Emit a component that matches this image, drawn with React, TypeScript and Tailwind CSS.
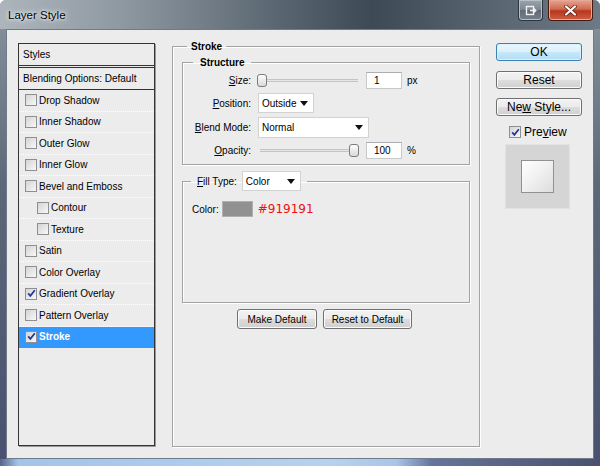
import React from 'react';

const sans = "font-['Liberation_Sans',Arial,sans-serif]";

function CheckBox({ checked = false }: { checked?: boolean }) {
  return (
    <span className="flex h-[12px] w-[12px] shrink-0 items-center justify-center border border-[#8f8f8f] bg-linear-to-br from-[#d4d4d4] to-[#f8f8f8]">
      {checked && (
        <svg width="9" height="9" viewBox="0 0 9 9">
          <path d="M1.2 4.4 L3.4 6.9 L7.8 1.3" fill="none" stroke="#23399e" strokeWidth="1.8" />
        </svg>
      )}
    </span>
  );
}

function WinButton({ children, primary = false, className = '' }: { children: React.ReactNode; primary?: boolean; className?: string }) {
  return (
    <button
      className={`flex items-center justify-center rounded-[3px] border text-black ${
        primary
          ? 'border-[#3c7fb1] bg-[linear-gradient(180deg,#eaf6fd_0%,#d9f0fc_50%,#c6e8fa_51%,#b3dcf3_100%)] shadow-[inset_0_0_0_1px_#d6f3ff]'
          : 'border-[#707070] bg-[linear-gradient(180deg,#f3f3f3_0%,#ebebeb_50%,#dddddd_51%,#cfcfcf_100%)] shadow-[inset_0_0_0_1px_#fbfbfb]'
      } ${className}`}
    >
      {children}
    </button>
  );
}

function Dropdown({ value, className = '' }: { value: string; className?: string }) {
  return (
    <div className={`flex items-center justify-between border border-[#d2d2d2] bg-white pl-[3px] pr-[5px] ${className}`}>
      <span>{value}</span>
      <svg width="8" height="5" viewBox="0 0 8 5">
        <path d="M0 0 H8 L4 5 Z" fill="#111" />
      </svg>
    </div>
  );
}

function Slider({ at }: { at: 'start' | 'end' }) {
  return (
    <div className="relative h-[13px] w-[104px]">
      <div className="absolute left-[3px] right-[3px] top-[5px] h-[3px] border-y border-[#c4c4c4] bg-[#e6e6e6]" />
      <div
        className={`absolute top-0 h-[13px] w-[10px] rounded-[3px] border border-[#7c7c7c] bg-linear-to-b from-[#fdfdfd] to-[#d9d9d9] ${
          at === 'start' ? 'left-0' : 'right-[2px]'
        }`}
      />
    </div>
  );
}

function NumberBox({ value }: { value: string }) {
  return (
    <div className="flex h-[17px] w-[36px] items-center border border-[#c9c9c9] border-t-[#abadb3] bg-white pl-[7px]">
      {value}
    </div>
  );
}

const styleRows = [
  { label: 'Drop Shadow' },
  { label: 'Inner Shadow' },
  { label: 'Outer Glow' },
  { label: 'Inner Glow' },
  { label: 'Bevel and Emboss' },
  { label: 'Contour', indent: true },
  { label: 'Texture', indent: true },
  { label: 'Satin' },
  { label: 'Color Overlay' },
  { label: 'Gradient Overlay', checked: true },
  { label: 'Pattern Overlay' },
  { label: 'Stroke', checked: true, selected: true },
];

export default function App() {
  return (
    <div className={`flex h-[466px] w-[600px] flex-col overflow-hidden rounded-t-[6px] bg-[linear-gradient(180deg,#8a949e_0%,#5d6778_40%,#4a5070_100%)] text-[10px] leading-[13px] text-black ${sans}`}>
      {/* Title bar */}
      <div className="flex h-[29px] shrink-0 items-start bg-[linear-gradient(90deg,#adb5bc_0%,#8f99a2_20%,#5c6873_45%,#3d4a55_62%,#56636e_80%,#6d7984_100%)]">
        <span className="pl-[8px] pt-[8px] text-[11.5px] leading-[14px] [text-shadow:0_0_6px_#fff,0_0_3px_#fff]">Layer Style</span>
        <div className="ml-auto flex h-[21px] w-[25px] items-center justify-center rounded-b-[4px] border border-t-0 border-[#2d3640] bg-[linear-gradient(180deg,#9aa4ad_0%,#7b8690_50%,#5f6a74_51%,#75808a_100%)] shadow-[inset_0_0_0_1px_#b8c0c7]">
          <svg width="12" height="11" viewBox="0 0 12 11">
            <rect x="1.5" y="1.5" width="7" height="8" fill="none" stroke="#f2f2f2" strokeWidth="1.4" />
            <path d="M5 5.5 H10.5 M8.5 3.3 L10.8 5.5 L8.5 7.7" fill="none" stroke="#f2f2f2" strokeWidth="1.4" />
          </svg>
        </div>
        <div className="ml-[5px] mr-[7px] flex h-[21px] w-[45px] items-center justify-center rounded-b-[4px] border border-t-0 border-[#4a1a12] bg-[linear-gradient(180deg,#e5a591_0%,#cf6b52_45%,#b8361c_55%,#cc6044_100%)] shadow-[inset_0_0_0_1px_#e8a898]">
          <svg width="13" height="11" viewBox="0 0 13 11">
            <path d="M2 1.5 L11 9.5 M11 1.5 L2 9.5" stroke="#5a1a10" strokeWidth="3.6" strokeLinecap="round" />
            <path d="M2 1.5 L11 9.5 M11 1.5 L2 9.5" stroke="#ffffff" strokeWidth="2.2" strokeLinecap="round" />
          </svg>
        </div>
      </div>

      {/* Client */}
      <div className="flex flex-1 px-[6px]">
        <div className="flex flex-1 items-start border border-[#6e7b89] bg-[#ececec]">
          {/* Styles list */}
          <div className="ml-[11px] mt-[13px] flex h-[403px] w-[137px] flex-col border border-[#343434] shadow-[1px_1px_0_#9a9a9a]">
            <div className="flex h-[24px] items-center border-b-[3px] border-double border-[#333] pl-[4px]">Styles</div>
            <div className="flex h-[22px] items-center border-b border-[#333] pl-[4px]">Blending Options: Default</div>
            {styleRows.map((row) => (
              <div
                key={row.label}
                className={`flex h-[21.5px] items-center gap-[2px] border-b border-dotted ${
                  row.selected ? 'border-[#3399ff] bg-[#3399ff] font-bold text-white' : 'border-white'
                } ${row.indent ? 'pl-[18px]' : 'pl-[6px]'}`}
              >
                <CheckBox checked={row.checked} />
                <span>{row.label}</span>
              </div>
            ))}
          </div>

          {/* Stroke */}
          <fieldset className="ml-[17px] mt-[10px] h-[407px] w-[308px] border border-[#a3a3a3] shadow-[inset_1px_1px_0_#fff,1px_1px_0_#fff]">
            <legend className="ml-[14px] px-[4px] font-bold">Stroke</legend>

            <fieldset className="mx-[9px] mt-[3px] border border-[#a3a3a3] pb-[4px] shadow-[inset_1px_1px_0_#fff,1px_1px_0_#fff]">
              <legend className="ml-[10px] px-[7px] font-bold">Structure</legend>
              <div className="flex h-[22px] items-center">
                <span className="w-[68px] text-right">
                  <span className="underline">S</span>ize:
                </span>
                <div className="ml-[6px]">
                  <Slider at="start" />
                </div>
                <div className="ml-[5px]">
                  <NumberBox value="1" />
                </div>
                <span className="ml-[5px]">px</span>
              </div>
              <div className="flex h-[24px] items-center">
                <span className="w-[68px] text-right">
                  <span className="underline">P</span>osition:
                </span>
                <Dropdown value="Outside" className="ml-[7px] h-[20px] w-[56px]" />
              </div>
              <div className="flex h-[25px] items-center">
                <span className="w-[68px] text-right">
                  <span className="underline">B</span>lend Mode:
                </span>
                <Dropdown value="Normal" className="ml-[7px] h-[21px] w-[111px]" />
              </div>
              <div className="flex h-[20px] items-center">
                <span className="w-[68px] text-right">
                  <span className="underline">O</span>pacity:
                </span>
                <div className="ml-[6px]">
                  <Slider at="end" />
                </div>
                <div className="ml-[5px]">
                  <NumberBox value="100" />
                </div>
                <span className="ml-[5px]">%</span>
              </div>
            </fieldset>

            <fieldset className="mx-[9px] mt-[6px] h-[132px] border border-[#a3a3a3] shadow-[inset_1px_1px_0_#fff,1px_1px_0_#fff]">
              <legend className="ml-[8px] flex items-center px-[6px]">
                <span>
                  <span className="underline">F</span>ill Type:
                </span>
                <Dropdown value="Color" className="ml-[5px] h-[20px] w-[59px]" />
              </legend>
              <div className="mt-[10px] flex items-center pl-[9px]">
                <span>Color:</span>
                <div className="ml-[3px] h-[16px] w-[31px] border border-[#b0b0b0] bg-[#919191]" />
                <span className="ml-[5px] font-['DejaVu_Sans',Verdana,sans-serif] text-[12px] leading-[16px] text-[#ee1111]">#919191</span>
              </div>
            </fieldset>

            <div className="mt-[6px] flex justify-center gap-[6px] pr-[3px]">
              <WinButton className="h-[20px] w-[80px]">Make Default</WinButton>
              <WinButton className="h-[20px] w-[89px]">Reset to Default</WinButton>
            </div>
          </fieldset>

          {/* Right column */}
          <div className="ml-[16px] mt-[13px] flex w-[86px] flex-col text-[12px] leading-[14px]">
            <WinButton primary className="h-[18px] w-[86px]">OK</WinButton>
            <WinButton className="mt-[10px] h-[18px] w-[86px]">Reset</WinButton>
            <WinButton className="mt-[9px] h-[18px] w-[86px]">
              Ne<span className="underline">w</span>&nbsp;Style...
            </WinButton>
            <div className="ml-[13px] mt-[9px] flex h-[14px] items-center gap-[3px]">
              <CheckBox checked />
              <span>
                Pre<span className="underline">v</span>iew
              </span>
            </div>
            <div className="ml-[9px] mt-[5px] flex h-[65px] w-[65px] items-center justify-center border border-[#e2e2e2] bg-[#d5d5d5]">
              <div className="h-[33px] w-[33px] border border-[#919191] bg-linear-to-br from-[#ffffff] via-[#f0f0f0] to-[#dcdcdc]" />
            </div>
          </div>
        </div>
      </div>

      {/* Bottom frame */}
      <div className="h-[7px] shrink-0 bg-[linear-gradient(90deg,#56648a_0%,#a3c4e9_3%,#b6d2ef_55%,#a9c6e8_66%,#66739a_72%,#4b5070_100%)]" />
    </div>
  );
}
